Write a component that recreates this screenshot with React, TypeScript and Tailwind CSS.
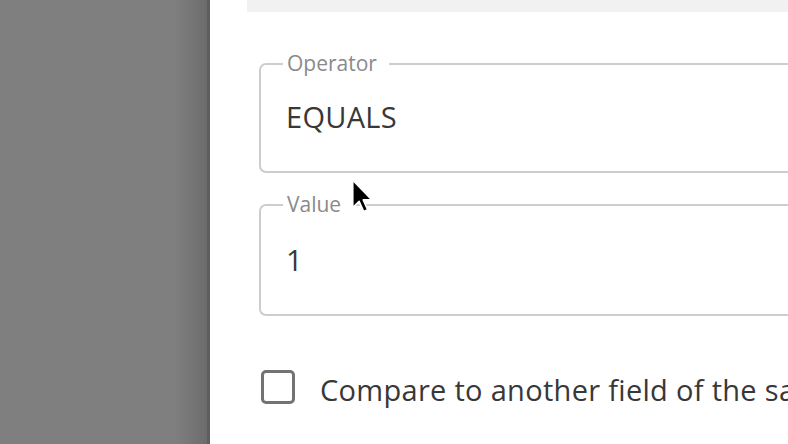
import React from 'react';

function OutlinedField({ label, value, valueMt }: { label: string; value: string; valueMt: string }) {
  return (
    <fieldset className="m-0 min-w-0 rounded-[7px] border-2 border-[#cdcdcd] pb-[40px] pl-[22px] pr-0 pt-0">
      <legend className="pl-[4px] pr-[12px] text-[21px] leading-[21px] text-[#8a8a8a]">{label}</legend>
      <div className={`${valueMt} pl-[3px] text-[29px] leading-[28px] tracking-[0.3px] text-[#383838]`}>{value}</div>
    </fieldset>
  );
}

function Cursor() {
  return (
    <svg width="23" height="36" viewBox="0 0 13 20" className="pointer-events-none absolute left-[351px] top-[178px]">
      <path
        d="M1 1 L1 16.5 L4.6 13 L7.2 18.8 L9.4 17.8 L6.9 12.2 L11.8 12.2 Z"
        fill="#000"
        stroke="#fff"
        strokeWidth="0.9"
        strokeLinejoin="round"
      />
    </svg>
  );
}

export default function App() {
  return (
    <div className="relative flex h-[444px] w-[788px] overflow-hidden bg-white font-['Open_Sans',sans-serif]">
      {/* dimmed backdrop + drawer edge shadow */}
      <div className="flex w-[210px] shrink-0 bg-[#7f7f7f]">
        <div className="flex-1" />
        <div className="w-[32px] bg-gradient-to-r from-[#7f7f7f] to-[#6c6c6c]" />
        <div className="w-[3px] bg-[#5e5e5e]" />
      </div>

      <div className="w-[700px] shrink-0 bg-white">
        <div className="ml-[37px] h-[12px] bg-[#f0f1f0]" />

        <div className="mt-[41px] flex flex-col pl-[49px]">
          <OutlinedField label="Operator" value="EQUALS" valueMt="mt-[29px]" />
          <div className="mt-[21px]">
            <OutlinedField label="Value" value="1" valueMt="mt-[31px]" />
          </div>

          <div className="ml-[2px] mt-[54px] flex items-center gap-[25px]">
            <div className="h-[34px] w-[34px] shrink-0 rounded-[5px] border-[3px] border-[#737373]" />
            <span className="mt-[6px] whitespace-nowrap text-[29px] leading-[28px] tracking-[0.3px] text-[#383838]">
              Compare to another field of the same record
            </span>
          </div>
        </div>
      </div>

      <Cursor />
    </div>
  );
}
